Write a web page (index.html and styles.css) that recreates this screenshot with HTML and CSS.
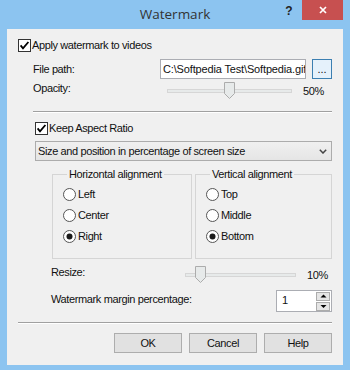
FILE: index.html
```html
<!DOCTYPE html>
<html>
<head>
<meta charset="utf-8">
<title>Watermark</title>
<link rel="stylesheet" href="styles.css">
</head>
<body>
<div class="window">
  <div class="titlebar">
    <div class="title">Watermark</div>
    <div class="caption-btns">
      <div class="help-btn">?</div>
      <div class="close-btn">
        <svg width="8" height="8" viewBox="0 0 8 8"><path d="M1 1 L7 7 M7 1 L1 7" stroke="#fff" stroke-width="1.7" fill="none"/></svg>
      </div>
    </div>
  </div>
  <div class="client">
    <div class="check-row apply-row">
      <svg class="checkbox" width="13" height="13" viewBox="0 0 13 13"><rect x="0.5" y="0.5" width="12" height="12" fill="#fff" stroke="#333"/><path d="M2.6 6.4 L5 9.3 L10.4 3" fill="none" stroke="#000" stroke-width="1.8"/></svg>
      <span class="check-label">Apply watermark to videos</span>
    </div>

    <div class="sec1">
      <div class="file-row">
        <span class="lbl lbl-fp">File path:</span>
        <div class="textbox">C:\Softpedia Test\Softpedia.gif</div>
        <div class="browse">...</div>
      </div>
      <div class="slider-row opacity-row">
        <span class="lbl lbl-slider">Opacity:</span>
        <div class="slider op-slider" style="--v:0.5">
          <div class="track"></div>
          <svg class="thumb" width="11" height="17" viewBox="0 0 11 17"><path d="M0.5 0.5 H10.5 V11.5 L5.5 16.5 L0.5 11.5 Z" fill="#e7eaea" stroke="#acacac"/></svg>
        </div>
        <span class="pct">50%</span>
      </div>
      <div class="sep"></div>
    </div>

    <div class="sec2">
      <div class="check-row keep-row">
        <svg class="checkbox" width="13" height="13" viewBox="0 0 13 13"><rect x="0.5" y="0.5" width="12" height="12" fill="#fff" stroke="#333"/><path d="M2.6 6.4 L5 9.3 L10.4 3" fill="none" stroke="#000" stroke-width="1.8"/></svg>
        <span class="check-label">Keep Aspect Ratio</span>
      </div>
      <div class="combo">
        <span class="combo-text">Size and position in percentage of screen size</span>
        <svg class="chev" width="8" height="5" viewBox="0 0 8 5"><path d="M0.8 0.8 L4 4 L7.2 0.8" fill="none" stroke="#444" stroke-width="1.5"/></svg>
      </div>

      <div class="sec3">
        <div class="groups">
          <fieldset class="group group-h">
            <legend>Horizontal alignment</legend>
            <div class="radio-row">
              <svg class="radio" width="13" height="13" viewBox="0 0 13 13"><circle cx="6.5" cy="6.5" r="6" fill="#fff" stroke="#555"/></svg>
              <span>Left</span>
            </div>
            <div class="radio-row">
              <svg class="radio" width="13" height="13" viewBox="0 0 13 13"><circle cx="6.5" cy="6.5" r="6" fill="#fff" stroke="#555"/></svg>
              <span>Center</span>
            </div>
            <div class="radio-row">
              <svg class="radio" width="13" height="13" viewBox="0 0 13 13"><circle cx="6.5" cy="6.5" r="6" fill="#fff" stroke="#555"/><circle cx="6.5" cy="6.5" r="3" fill="#1a1a1a"/></svg>
              <span>Right</span>
            </div>
          </fieldset>
          <fieldset class="group group-v">
            <legend>Vertical alignment</legend>
            <div class="radio-row">
              <svg class="radio" width="13" height="13" viewBox="0 0 13 13"><circle cx="6.5" cy="6.5" r="6" fill="#fff" stroke="#555"/></svg>
              <span>Top</span>
            </div>
            <div class="radio-row">
              <svg class="radio" width="13" height="13" viewBox="0 0 13 13"><circle cx="6.5" cy="6.5" r="6" fill="#fff" stroke="#555"/></svg>
              <span>Middle</span>
            </div>
            <div class="radio-row">
              <svg class="radio" width="13" height="13" viewBox="0 0 13 13"><circle cx="6.5" cy="6.5" r="6" fill="#fff" stroke="#555"/><circle cx="6.5" cy="6.5" r="3" fill="#1a1a1a"/></svg>
              <span>Bottom</span>
            </div>
          </fieldset>
        </div>

        <div class="slider-row resize-row">
          <span class="lbl lbl-slider">Resize:</span>
          <div class="slider rs-slider" style="--v:0.1">
            <div class="track"></div>
            <svg class="thumb" width="11" height="17" viewBox="0 0 11 17"><path d="M0.5 0.5 H10.5 V11.5 L5.5 16.5 L0.5 11.5 Z" fill="#e7eaea" stroke="#acacac"/></svg>
          </div>
          <span class="pct">10%</span>
        </div>

        <div class="margin-row">
          <span class="lbl lbl-margin">Watermark margin percentage:</span>
          <div class="spin">
            <span class="spin-text">1</span>
            <div class="spin-btns">
              <div class="spin-btn"><svg width="7" height="5" viewBox="0 0 7 5"><path d="M3.5 0.5 L6.5 3.5 H0.5 Z" fill="#000"/></svg></div>
              <div class="spin-btn"><svg width="7" height="5" viewBox="0 0 7 5"><path d="M0.5 1 H6.5 L3.5 4 Z" fill="#000"/></svg></div>
            </div>
          </div>
        </div>
      </div>
    </div>

    <div class="sep sep-bottom"></div>

    <div class="buttons">
      <div class="btn">OK</div>
      <div class="btn">Cancel</div>
      <div class="btn">Help</div>
    </div>
  </div>
</div>
</body>
</html>
```

FILE: styles.css
```css
* {
  box-sizing: border-box;
  margin: 0;
  padding: 0;
}

html, body {
  width: 350px;
  height: 370px;
  overflow: hidden;
}

body {
  background: #8cc4f0;
  font-family: "Liberation Sans", Arial, sans-serif;
  font-size: 11px;
  letter-spacing: -0.38px;
  line-height: 13px;
  color: #111;
}

.window {
  width: 350px;
  height: 370px;
  display: flex;
  flex-direction: column;
}

/* Title bar */
.titlebar {
  height: 29px;
  flex: none;
  display: grid;
}

.title {
  grid-area: 1 / 1;
  justify-self: center;
  align-self: start;
  font-family: "Open Sans", "Noto Sans", sans-serif;
  font-size: 13.5px;
  letter-spacing: 0;
  line-height: 28px;
  color: #333;
}

.caption-btns {
  grid-area: 1 / 1;
  justify-self: end;
  align-self: start;
  display: flex;
  margin-right: 7px;
}

.help-btn {
  width: 26px;
  height: 20px;
  text-align: center;
  font-family: "Liberation Sans", Arial, sans-serif;
  font-weight: bold;
  font-size: 12px;
  letter-spacing: 0;
  line-height: 22px;
  color: #222;
}

.close-btn {
  width: 41px;
  height: 20px;
  background: #c75050;
  display: flex;
  align-items: center;
  justify-content: center;
}

/* Client area */
.client {
  margin: 0 7px;
  height: 336px;
  flex: none;
  background: #f0f0f0;
  padding: 0 11px;
  display: flex;
  flex-direction: column;
}

.check-row {
  display: flex;
  align-items: center;
  height: 13px;
}

.checkbox {
  flex: none;
  display: block;
}

.check-label {
  margin-left: 1px;
  white-space: nowrap;
}

.apply-row {
  margin-top: 10px;
}

.sec1 {
  padding-left: 15px;
}

.file-row {
  margin-top: 7px;
  height: 20px;
  display: flex;
  align-items: center;
}

.lbl {
  white-space: nowrap;
  flex: none;
}

.lbl-fp {
  width: 127px;
}

.textbox {
  width: 146px;
  height: 20px;
  background: #fff;
  border: 1px solid #abadb3;
  padding-left: 2px;
  line-height: 18px;
  letter-spacing: -0.15px;
  white-space: nowrap;
  overflow: hidden;
}

.browse {
  width: 20px;
  height: 20px;
  margin-left: 6px;
  border: 1px solid #3c7fb1;
  background: #e5f1fb;
  text-align: center;
  line-height: 19px;
  letter-spacing: 0;
}

/* sliders */
.slider-row {
  display: flex;
  align-items: flex-start;
  height: 19px;
}

.opacity-row {
  margin-top: 2px;
}

.lbl-slider {
  width: 134px;
  padding-top: 1px;
}

.slider {
  position: relative;
  height: 19px;
  flex: none;
}

.op-slider {
  width: 125px;
}

.rs-slider {
  width: 111px;
}

.track {
  margin-top: 8px;
  height: 4px;
  border: 1px solid #d6d6d6;
  background: #e7eaea;
}

.thumb {
  position: absolute;
  top: 1px;
  left: calc((100% - 11px) * var(--v));
  display: block;
}

.pct {
  margin-left: 11px;
  padding-top: 4px;
  white-space: nowrap;
}

.sep {
  height: 2px;
  border-top: 1px solid #a0a0a0;
  border-bottom: 1px solid #fff;
  flex: none;
}

.sec1 .sep {
  margin-top: 11px;
}

.sec2 {
  padding-left: 17px;
}

.keep-row {
  margin-top: 9px;
}

.combo {
  margin-top: 6px;
  height: 20px;
  border: 1px solid #acacac;
  background: linear-gradient(#f0f0f0, #e5e5e5);
  display: flex;
  align-items: center;
  padding-left: 2px;
  padding-right: 4px;
}

.combo-text {
  flex: 1;
  white-space: nowrap;
}

.chev {
  display: block;
}

.sec3 {
  padding-left: 16px;
}

.groups {
  margin-top: 7px;
  margin-left: 1px;
  display: flex;
  gap: 3px;
}

.group {
  height: 91px;
  border: 1px solid #d5d5d5;
  padding: 7px 10px 0;
  min-width: 0;
  display: flex;
  flex-direction: column;
  gap: 8px;
}

.group legend {
  margin-left: 4px;
  padding: 0 2px;
  line-height: 13px;
}

.group-h {
  width: 140px;
}

.group-v {
  width: 137px;
}

.radio-row {
  display: flex;
  align-items: center;
  height: 13px;
}

.radio {
  display: block;
  flex: none;
  margin-right: 2px;
}

.resize-row {
  margin-top: 6px;
  height: 20px;
}

.margin-row {
  margin-top: 5px;
  height: 22px;
  display: flex;
  align-items: flex-start;
}

.lbl-margin {
  padding-top: 3px;
}

.spin {
  margin-left: auto;
  width: 56px;
  height: 22px;
  background: #fff;
  border: 1px solid #abadb3;
  display: flex;
}

.spin-text {
  flex: 1;
  padding-left: 5px;
  padding-top: 3px;
}

.spin-btns {
  display: flex;
  flex-direction: column;
  padding: 1px 1px 0 0;
  gap: 1px;
}

.spin-btn {
  width: 14px;
  height: 9px;
  border: 1px solid #acacac;
  background: #e5e5e5;
  display: flex;
  align-items: center;
  justify-content: center;
}

.spin-btn svg {
  display: block;
}

.sep-bottom {
  margin-top: 10px;
}

.buttons {
  margin-top: 9px;
  display: flex;
  justify-content: flex-end;
  gap: 7px;
}

.btn {
  width: 68px;
  height: 20px;
  border: 1px solid #adadad;
  background: #e1e1e1;
  text-align: center;
  line-height: 18px;
}
```
